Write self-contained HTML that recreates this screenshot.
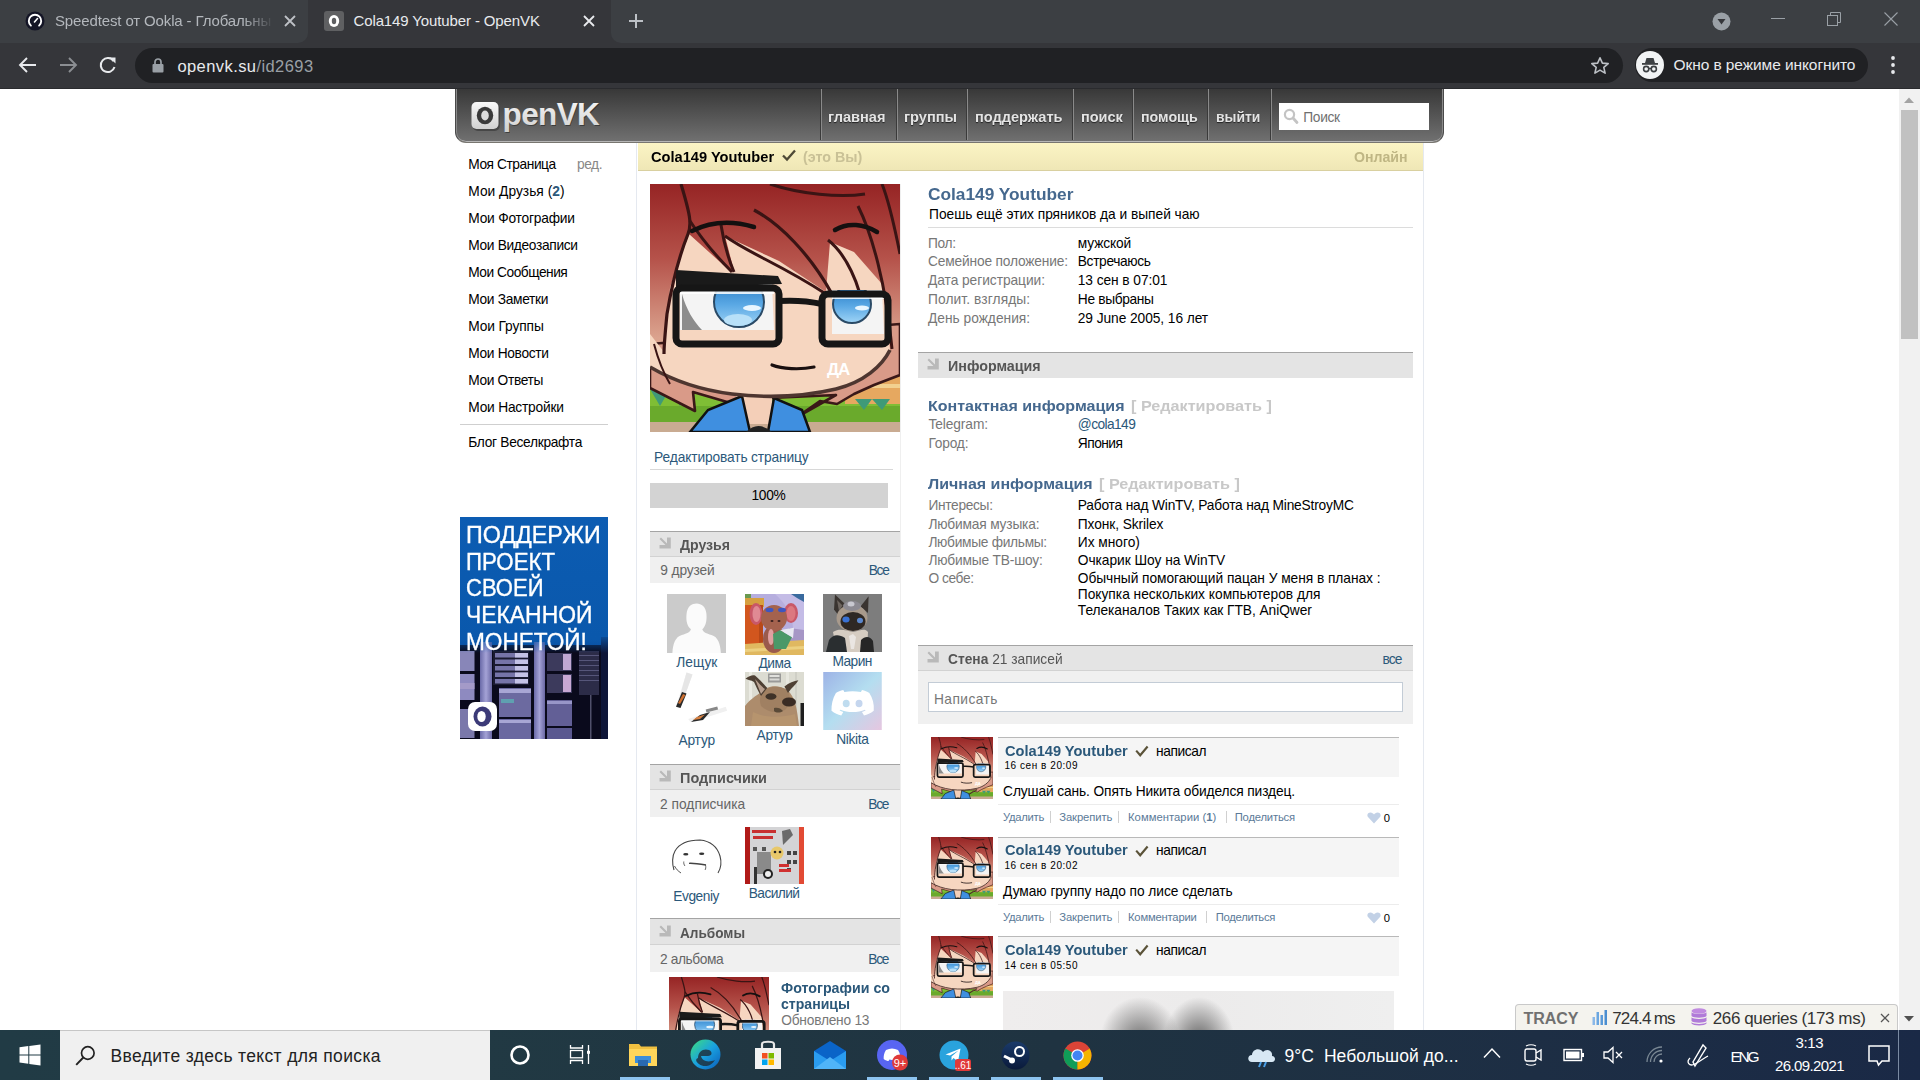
<!DOCTYPE html>
<html><head><meta charset="utf-8"><title>OpenVK</title>
<style>
*{margin:0;padding:0;box-sizing:border-box}
html,body{width:1920px;height:1080px;overflow:hidden;background:#fff;font-family:"Liberation Sans",sans-serif}
.a{position:absolute}
.t{position:absolute;white-space:pre;line-height:normal;font-family:"Liberation Sans",sans-serif}
</style></head><body>
<svg width="0" height="0" style="position:absolute">
<defs>
<linearGradient id="hairg" x1="0" y1="0" x2="0" y2="1">
<stop offset="0" stop-color="#962424"/><stop offset="0.3" stop-color="#b5524a"/><stop offset="0.62" stop-color="#dba38e"/><stop offset="1" stop-color="#e9c0a8"/>
</linearGradient>
<linearGradient id="irisg" x1="0" y1="0" x2="0" y2="1">
<stop offset="0" stop-color="#1f74c0"/><stop offset="0.55" stop-color="#5aa8e4"/><stop offset="1" stop-color="#9fd4f6"/>
</linearGradient>
<clipPath id="avclip"><rect x="0" y="0" width="250" height="248"/></clipPath>
<symbol id="ava" viewBox="0 0 250 248">
<g clip-path="url(#avclip)">
<rect x="0" y="0" width="250" height="248" fill="url(#hairg)"/>
<!-- scenery bottom -->
<rect x="0" y="196" width="250" height="52" fill="#7fbe35"/>
<rect x="0" y="222" width="250" height="18" fill="#6aaa2c"/>
<rect x="0" y="238" width="250" height="10" fill="#c9ab92"/>
<polygon points="0,205 10,222 20,205 30,222 40,205" fill="#3f9a78"/>
<rect x="195" y="178" width="55" height="42" fill="#e6a860"/>
<rect x="195" y="186" width="55" height="4" fill="#d2763a"/>
<rect x="195" y="200" width="55" height="4" fill="#f2d090"/>
<polygon points="205,215 214,226 222,215 232,226 240,215" fill="#3f9a78"/>
<!-- back hair below chin -->
<path d="M0,160 L0,204 L45,227 L43,208 L84,220 L120,214 L186,211 L147,233 L170,217 L187,220 L204,210 L224,201 L250,191 L250,140 Z" fill="#d99a88" stroke="#3a1818" stroke-width="2.6" stroke-linejoin="round"/>
<!-- neck & shirt -->
<rect x="86" y="200" width="36" height="40" fill="#f4cfb8"/>
<path d="M40,248 L58,226 L92,212 L100,248 Z" fill="#3f8fe0" stroke="#111" stroke-width="2.5"/>
<path d="M118,248 L124,214 L152,226 L160,248 Z" fill="#3f8fe0" stroke="#111" stroke-width="2.5"/>
<path d="M96,248 Q108,236 122,248 Z" fill="#222"/>
<!-- face skin -->
<path d="M20,104 L26,85 L39,50 L80,87 L84,87 L75,52 L129,77 L176,108 L180,58 L204,68 L232,100 L240,166 C232,182 214,198 186,205 C152,213 116,214 82,210 C50,206 22,196 0,183 L0,150 L14,168 Z" fill="#f6d6c0"/>
<!-- chin outline -->
<path d="M0,183 C22,196 50,206 82,210 C116,214 152,213 186,205 C214,198 232,182 240,166" fill="none" stroke="#4e3630" stroke-width="3.6"/>
<!-- hair strands over face -->
<path d="M31,0 C40,30 42,40 38,50 C30,70 22,100 17,130 C15,150 14,160 14,170" fill="none" stroke="#3a1414" stroke-width="3.2"/>
<path d="M40,37 C55,60 70,76 82,88" fill="none" stroke="#3a1414" stroke-width="3"/>
<path d="M71,41 C74,60 78,74 84,88" fill="none" stroke="#3a1414" stroke-width="3"/>
<path d="M104,26 C130,40 160,70 182,110" fill="none" stroke="#3a1414" stroke-width="3.2"/>
<path d="M75,52 C100,70 130,80 176,110" fill="none" stroke="#3a1414" stroke-width="3"/>
<path d="M178,56 C196,70 210,100 214,130" fill="none" stroke="#3a1414" stroke-width="3"/>
<path d="M208,22 C222,50 236,100 242,165" fill="none" stroke="#3a1414" stroke-width="3"/>
<path d="M120,0 C150,10 190,14 215,10" fill="none" stroke="#3a1414" stroke-width="3"/>
<path d="M232,0 C240,20 246,50 250,70" fill="none" stroke="#3a1414" stroke-width="3"/>
<path d="M4,160 C8,175 14,190 20,200" fill="none" stroke="#3a1414" stroke-width="2"/>
<!-- brows -->
<path d="M42,47 C60,38 80,36 104,43" fill="none" stroke="#141010" stroke-width="4.5" stroke-linecap="round"/>
<path d="M185,46 C198,38 214,40 227,48" fill="none" stroke="#141010" stroke-width="4.5" stroke-linecap="round"/>
<!-- eyes -->
<path d="M30,98 L122,100 L124,146 L30,146 Z" fill="#f4f4f4"/>
<path d="M32,110 C36,125 44,138 52,146 L32,146 Z" fill="#8c8c8c"/>
<clipPath id="eyeL"><path d="M30,98 L122,100 L124,146 L30,146 Z"/></clipPath>
<g clip-path="url(#eyeL)">
<circle cx="89" cy="118" r="25" fill="url(#irisg)" stroke="#2a4a66" stroke-width="2"/>
<ellipse cx="102" cy="124" rx="9" ry="3" fill="#e8f6ff"/>
<ellipse cx="88" cy="136" rx="14" ry="6" fill="#b8e0f8"/>
</g>
<rect x="30" y="107" width="94" height="3" fill="#ffffff" opacity="0.85"/>
<path d="M182,106 L232,106 L234,150 L182,150 Z" fill="#f4f4f4"/>
<clipPath id="eyeR"><path d="M182,106 L232,106 L234,150 L182,150 Z"/></clipPath>
<g clip-path="url(#eyeR)">
<circle cx="202" cy="120" r="19" fill="url(#irisg)" stroke="#2a4a66" stroke-width="2"/>
<ellipse cx="212" cy="124" rx="7" ry="2.5" fill="#e8f6ff"/>
</g>
<rect x="182" y="112" width="52" height="3" fill="#ffffff" opacity="0.85"/>
<path d="M26,86 L128,92 L132,100 L26,104 Z" fill="#1a1a1a"/>
<!-- glasses -->
<rect x="26" y="104" width="103" height="56" rx="6" fill="none" stroke="#161616" stroke-width="7"/>
<rect x="172" y="110" width="66" height="50" rx="6" fill="none" stroke="#161616" stroke-width="7"/>
<path d="M129,117 C145,116 158,117 172,120" fill="none" stroke="#161616" stroke-width="6"/>
<!-- mouth -->
<path d="M122,181 C132,185 150,186 164,183" fill="none" stroke="#1a1010" stroke-width="3.2" stroke-linecap="round"/>
<text x="177" y="191" font-family="Liberation Sans" font-weight="700" font-size="17" fill="#fff" letter-spacing="-1">ДА</text>
</g>
</symbol>
</defs>
</svg>

<!-- chrome tabstrip -->
<div class="a" style="left:0;top:0;width:1920px;height:44px;background:#35363a"></div>
<div class="a" style="left:0;top:0;width:308px;height:43px;background:#3c3f43;border-radius:0 0 10px 0"></div>
<div class="a" style="left:611px;top:0;width:1309px;height:43px;background:#3c3f43;border-radius:0 0 0 10px"></div>
<!-- toolbar -->
<div class="a" style="left:0;top:44px;width:1920px;height:45px;background:#35363a"></div>
<div class="a" style="left:0;top:88px;width:1920px;height:1px;background:#2a2b2e"></div>
<div class="a" style="left:135px;top:48px;width:1488px;height:35px;background:#202124;border-radius:18px"></div>
<div class="a" style="left:1635px;top:48px;width:233px;height:34px;background:#202124;border-radius:17px"></div>
<!-- page -->
<div class="a" style="left:0;top:89px;width:1899px;height:941px;background:#fff"></div>
<!-- scrollbar -->
<div class="a" style="left:1899px;top:89px;width:21px;height:941px;background:#f1f1f1"></div>
<div class="a" style="left:1901px;top:110px;width:17px;height:229px;background:#c1c1c1"></div>

<!-- OpenVK header -->
<div class="a" style="left:455px;top:89px;width:989px;height:54px;background:linear-gradient(#383838,#717171);border:1px solid #4a4a4a;border-top:none;border-bottom-color:#787670;border-radius:0 0 11px 11px;box-shadow:inset 1px 0 0 #8a8a8a, inset -1px 0 0 #8a8a8a, inset 0 -1px 0 #b6b6b6"></div>

<!-- main container -->
<div class="a" style="left:636px;top:143px;width:1px;height:887px;background:#e5e9f0"></div>
<div class="a" style="left:1423px;top:143px;width:1px;height:887px;background:#e5e9f0"></div>
<div class="a" style="left:638px;top:143px;width:785px;height:28px;background:linear-gradient(#fbf4c4,#efe7b6);border-bottom:1px solid #d9d0a0"></div>
<div class="a" style="left:900px;top:184px;width:1px;height:846px;background:#efefef"></div>


<!-- left nav separator -->
<div class="a" style="left:460px;top:424px;width:148px;height:1px;background:#cfcfcf"></div>

<!-- profile left column widgets -->
<div class="a" style="left:650px;top:469px;width:243px;height:1px;background:#d8d8d8"></div>
<div class="a" style="left:650px;top:483px;width:238px;height:25px;background:#d3d3d3"></div>

<!-- section headers left -->
<div class="a" style="left:650px;top:531px;width:250px;height:26px;background:#e4e4e4;border-top:1px solid #a4a4a4;border-bottom:1px solid #d2d2d2"></div>
<div class="a" style="left:650px;top:557px;width:250px;height:26px;background:#f0f0f0"></div>
<div class="a" style="left:650px;top:764px;width:250px;height:26px;background:#e4e4e4;border-top:1px solid #a4a4a4;border-bottom:1px solid #d2d2d2"></div>
<div class="a" style="left:650px;top:790px;width:250px;height:27px;background:#f0f0f0"></div>
<div class="a" style="left:650px;top:918px;width:250px;height:27px;background:#e4e4e4;border-top:1px solid #a4a4a4;border-bottom:1px solid #d2d2d2"></div>
<div class="a" style="left:650px;top:945px;width:250px;height:27px;background:#f0f0f0"></div>

<!-- right column -->
<div class="a" style="left:928px;top:227px;width:485px;height:1px;background:#dcdcdc"></div>
<div class="a" style="left:918px;top:352px;width:495px;height:26px;background:#e4e4e4;border-top:1px solid #a4a4a4"></div>
<div class="a" style="left:918px;top:645px;width:495px;height:26px;background:#e4e4e4;border-top:1px solid #a4a4a4;border-bottom:1px solid #d2d2d2"></div>
<div class="a" style="left:918px;top:671px;width:495px;height:53px;background:#f0f0f0"></div>
<div class="a" style="left:928px;top:682px;width:475px;height:30px;background:#fff;border:1px solid #c3ccd6"></div>

<!-- posts -->
<div class="a" style="left:998px;top:737px;width:401px;height:40px;background:#f5f5f5;border-top:1px solid #b9b9b9"></div>
<div class="a" style="left:998px;top:804px;width:401px;height:1px;background:#ececec"></div>
<div class="a" style="left:998px;top:837px;width:401px;height:40px;background:#f5f5f5;border-top:1px solid #b9b9b9"></div>
<div class="a" style="left:998px;top:904px;width:401px;height:1px;background:#ececec"></div>
<div class="a" style="left:998px;top:936px;width:401px;height:40px;background:#f5f5f5;border-top:1px solid #b9b9b9"></div>


<!-- avatars -->
<svg class="a" style="left:650px;top:184px" width="250" height="248" viewBox="0 0 250 248" preserveAspectRatio="none"><use href="#ava"/></svg>
<svg class="a" style="left:931px;top:737px" width="62" height="62" viewBox="0 0 250 248" preserveAspectRatio="none"><use href="#ava"/></svg>
<svg class="a" style="left:931px;top:837px" width="62" height="62" viewBox="0 0 250 248" preserveAspectRatio="none"><use href="#ava"/></svg>
<svg class="a" style="left:931px;top:936px" width="62" height="62" viewBox="0 0 250 248" preserveAspectRatio="none"><use href="#ava"/></svg>
<svg class="a" style="left:669px;top:977px" width="100" height="100" viewBox="0 0 250 248" preserveAspectRatio="none"><use href="#ava"/></svg>

<!-- ===== friend thumbs ===== -->
<svg class="a" style="left:667px;top:594px" width="59" height="59" viewBox="0 0 438 438">
<rect width="438" height="438" fill="#cbcbcb"/>
<path d="M40,438 C45,370 60,320 110,305 C150,292 170,285 178,262 C150,240 140,200 145,150 C150,90 185,70 220,70 C255,70 290,95 293,150 C297,205 285,240 262,262 C270,285 290,292 330,305 C380,320 395,370 400,438 Z" fill="#fbfbfb"/>
</svg>
<svg class="a" style="left:745px;top:594px;filter:blur(0.35px)" width="59" height="61" viewBox="0 0 59 61">
<rect width="59" height="61" fill="#b6aede"/>
<path d="M30,0 L59,0 L59,61 L40,61 C52,40 52,20 30,0 Z" fill="#c4bce6"/>
<polygon points="46,0 59,0 59,8 52,4" fill="#3a6a9e"/>
<rect x="0" y="0" width="6" height="5" fill="#6a9a50"/>
<rect x="0" y="4" width="19" height="9" fill="#d6a040"/>
<rect x="0" y="11" width="18" height="45" fill="#d2561e"/>
<rect x="14" y="11" width="4" height="45" fill="#b84818"/>
<polygon points="44,34 59,36 59,50 44,48" fill="#a696c6"/>
<polygon points="0,50 59,46 59,61 0,61" fill="#e0b860"/>
<polygon points="0,55 59,52 59,55 0,58" fill="#ecd080"/>
<ellipse cx="11" cy="20" rx="6.5" ry="11" fill="#c85868"/>
<ellipse cx="11.5" cy="20" rx="4" ry="8" fill="#e08a94"/>
<ellipse cx="46" cy="19" rx="7" ry="10" fill="#c85868"/>
<ellipse cx="46" cy="19.5" rx="4.5" ry="7.5" fill="#dc7880"/>
<ellipse cx="29" cy="45" rx="11" ry="14" fill="#9a5a4c"/>
<ellipse cx="29" cy="24" rx="13" ry="13" fill="#a4624e"/>
<ellipse cx="26" cy="43" rx="3" ry="8" fill="#e0a0a0"/>
<ellipse cx="24.5" cy="16" rx="4" ry="2.2" fill="#3e56c0"/>
<ellipse cx="37" cy="16" rx="4" ry="2.2" fill="#3e56c0"/>
<ellipse cx="27" cy="27" rx="1.5" ry="1" fill="#3a2020"/><ellipse cx="34" cy="27" rx="1.5" ry="1" fill="#3a2020"/>
<polygon points="28,40 35,36 47,43 41,55 29,55" fill="#4a9868"/>
<polygon points="35,36 49,33.8 48,44.3 46.6,43.1" fill="#e8e8f2"/>
</svg>
<svg class="a" style="left:823px;top:594px;filter:blur(0.4px)" width="59" height="58" viewBox="0 0 59 58">
<rect width="59" height="58" fill="#7d7d7d"/>
<path d="M12,0.6 L22.5,10.5 L16,22 L11,15.5 Z" fill="#3a3430"/>
<path d="M14,6 L19.5,11.5 L16,17 Z" fill="#6e6660"/>
<path d="M45.6,2.2 L45,19 L37.5,12.5 Z" fill="#3a3430"/>
<ellipse cx="29" cy="24" rx="15.5" ry="13.5" fill="#a89a8c"/>
<ellipse cx="29" cy="12" rx="9" ry="5" fill="#8c8a92"/>
<ellipse cx="28" cy="10" rx="3.5" ry="2.5" fill="#c8c8d0"/>
<ellipse cx="30" cy="27.5" rx="12.5" ry="9.5" fill="#2e2824"/>
<ellipse cx="23" cy="25.5" rx="3.6" ry="3" fill="#3a72d4"/>
<ellipse cx="37" cy="26.5" rx="3" ry="2.8" fill="#5a86cc"/>
<path d="M10,38 C16,34 22,36 30,38 C38,36 42,34 45,38 L44,58 L14,58 Z" fill="#d6cdc2"/>
<path d="M26,42 L30,40 L33,43 L31,55 L28,55 Z" fill="#eae6e2"/>
<path d="M3,58 L6,46 C10,40 16,40 22,44 L24,58 Z" fill="#2a2e30"/>
<path d="M37,58 L38,46 C42,42 47,42 50,47 L51,58 Z" fill="#262626"/>
</svg>
<svg class="a" style="left:670px;top:670px" width="62" height="56" viewBox="0 0 62 56">
<polygon points="16.5,2.5 22.5,4.6 10.5,38 6,36.8" fill="#f2f2f2"/>
<polygon points="16.5,2.5 22.5,4.6 14,28 10,26" fill="#e6e6e6"/>
<polygon points="12,22 16.5,23.5 10.5,38 6,36.8" fill="#2a2a2a"/>
<polygon points="13,24 15.5,25 10,34 8,33" fill="#d07030"/>
<polygon points="55.8,36.8 57.1,40.8 20.9,52.2 18.2,48.9" fill="#f0f0f0"/>
<polygon points="30,45 40,42 33,50 21,52" fill="#2a2a2a"/>
<polygon points="27,47 35,44.5 30,49 23,50" fill="#d88040"/>
<rect x="36" y="38" width="12" height="3" fill="#888" transform="rotate(-15 42 40)"/>
</svg>
<svg class="a" style="left:745px;top:672px;filter:blur(0.35px)" width="59" height="54" viewBox="0 0 59 54">
<rect width="59" height="54" fill="#dcdcd2"/>
<rect x="4" y="0" width="3" height="54" fill="#ebebe3"/><rect x="41" y="0" width="3" height="54" fill="#e8e8e0"/><rect x="50" y="0" width="2" height="54" fill="#cfcfc6"/>
<rect x="23" y="1.5" width="13" height="9" fill="#9a9a98"/><rect x="24.5" y="3" width="10" height="2" fill="#e0e0dc"/><rect x="24.5" y="6.5" width="10" height="2" fill="#d8d8d4"/>
<path d="M0,54 L0,34 C6,26 14,22 22,16 C28,13 36,14 42,18 C50,24 52,36 54,54 Z" fill="#ad8c6c"/>
<path d="M18,20 C24,14 34,13 42,18 C46,24 46,32 40,38 C32,42 22,40 16,34 C14,28 15,24 18,20 Z" fill="#a08062"/>
<path d="M0.5,6.7 C4,3.5 8,2.5 10,3.5 C14,7 19,12 22.3,16 L16,24 C13,19 11,14 9,10 C6,8 3,8 0.5,6.7 Z" fill="#4e4034"/>
<path d="M10,7 C13,10 17,15 20,17 L16,22 C14,17 12,12 10,7 Z" fill="#b8a090"/>
<path d="M39.4,14.5 C44,11 49,9 53.4,8.3 C52,11 49,14 46,17 L43,21 Z" fill="#4e4034"/>
<ellipse cx="26" cy="24.5" rx="5.5" ry="3.3" fill="#3e3228"/>
<ellipse cx="44" cy="30" rx="7" ry="4.5" fill="#3a2c24"/>
<path d="M29,36 C32,35 36,36 38,39 C35,41 31,41 29,39 Z" fill="#5a4a38"/>
<path d="M8,40 C20,46 36,46 50,42 L52,54 L6,54 Z" fill="#b6946e"/>
<rect x="55.5" y="31" width="3.5" height="23" fill="#1e1e1e"/>
</svg>
<svg class="a" style="left:823px;top:672px" width="59" height="58" viewBox="0 0 438 434">
<defs><linearGradient id="dg" x1="0" y1="0" x2="1" y2="1"><stop offset="0" stop-color="#9db3e6"/><stop offset="0.5" stop-color="#b4def0"/><stop offset="1" stop-color="#e6c6e0"/></linearGradient></defs>
<rect width="438" height="434" fill="url(#dg)"/>
<path d="M150,135 C130,140 110,148 95,158 C70,200 60,245 62,290 C85,310 110,320 135,325 L150,300 C140,296 130,292 122,286 L128,282 C180,305 260,305 312,282 L318,286 C310,292 300,296 290,300 L305,325 C330,320 355,310 378,290 C382,240 370,195 345,158 C330,148 310,140 290,135 L282,150 C240,142 200,142 158,150 Z" fill="#fff"/>
<ellipse cx="172" cy="235" rx="26" ry="28" fill="#bfdcef"/>
<ellipse cx="268" cy="235" rx="26" ry="28" fill="#c5d6ee"/>
</svg>
<svg class="a" style="left:670px;top:838px" width="54" height="38" viewBox="0 0 54 38">
<path d="M4,32 C2,26 2,18 5,13 C9,6 18,2 30,2 C40,3 47,8 50,18 C52,25 51,30 48,35" fill="none" stroke="#444" stroke-width="1.1"/>
<path d="M4.5,28 C6,31 8,33 11,35" fill="none" stroke="#555" stroke-width="1"/>
<ellipse cx="15.8" cy="16.2" rx="2.6" ry="1.3" fill="#333"/>
<ellipse cx="31.7" cy="15.8" rx="2.6" ry="1.3" fill="#333"/>
<path d="M19,25.3 C24,25 30,26 36,27" fill="none" stroke="#444" stroke-width="1.3"/>
<path d="M13.8,23.5 C13.5,25 14,27 15,28" fill="none" stroke="#555" stroke-width="0.9"/>
<path d="M35.5,27 C36,29 35.8,31 35,32" fill="none" stroke="#555" stroke-width="0.9"/>
</svg>
<svg class="a" style="left:745px;top:827px;filter:blur(0.35px)" width="59" height="57" viewBox="0 0 59 57">
<rect width="59" height="57" fill="#cfcfcf"/>
<rect x="5" y="0" width="49" height="57" fill="#d4d4d6"/>
<rect x="0" y="0" width="5" height="57" fill="#b01a18"/>
<rect x="54" y="0" width="5" height="57" fill="#e24a34"/>
<rect x="7" y="3" width="24" height="3" fill="#c83030"/>
<rect x="8" y="9" width="20" height="3" fill="#c83030"/>
<polygon points="37,4 45,2 48,8 38,18" fill="#6a6a6a"/>
<rect x="8" y="20" width="4" height="4" fill="#555"/><rect x="17" y="20" width="4" height="4" fill="#555"/>
<rect x="42" y="24" width="4" height="4" fill="#444"/><rect x="48" y="24" width="4" height="4" fill="#444"/>
<rect x="42" y="33" width="4" height="4" fill="#444"/><rect x="48" y="33" width="4" height="4" fill="#444"/>
<rect x="42" y="41" width="4" height="4" fill="#444"/>
<rect x="12" y="25" width="14" height="22" fill="#8a8a8a"/>
<circle cx="32" cy="26" r="6.5" fill="#e8c86a"/>
<circle cx="30" cy="25" r="1.3" fill="#222"/><circle cx="35" cy="25" r="1.3" fill="#222"/>
<circle cx="23" cy="47" r="5" fill="#222"/><circle cx="23" cy="47" r="3" fill="#eee"/>
<rect x="9" y="40" width="3" height="17" fill="#333"/>
<rect x="34" y="37" width="10" height="3" fill="#d03030"/><rect x="34" y="42" width="12" height="3" fill="#d03030"/>
</svg>

<!-- ===== ad banner ===== -->
<svg class="a" style="left:460px;top:517px" width="148" height="222" viewBox="0 0 148 222">
<defs>
<linearGradient id="adg" x1="0" y1="0" x2="0" y2="1"><stop offset="0" stop-color="#0c5cb2"/><stop offset="0.55" stop-color="#0a58ac"/><stop offset="0.68" stop-color="#0b2f78"/><stop offset="1" stop-color="#070c2a"/></linearGradient>
<linearGradient id="pil" x1="0" y1="0" x2="1" y2="0"><stop offset="0" stop-color="#6a6aa8"/><stop offset="0.5" stop-color="#a4a2d6"/><stop offset="1" stop-color="#6a68a4"/></linearGradient>
<linearGradient id="fade" x1="0" y1="0" x2="0" y2="1"><stop offset="0" stop-color="#0a58ac" stop-opacity="1"/><stop offset="1" stop-color="#0a58ac" stop-opacity="0"/></linearGradient>
</defs>
<rect width="148" height="222" fill="url(#adg)"/>
<g>
<rect x="0" y="128" width="148" height="94" fill="#0a0a1c"/>
<!-- col A -->
<rect x="0" y="134" width="14.5" height="20" fill="#8886b8"/>
<rect x="0" y="157" width="14.5" height="26" fill="#8e8ac0"/>
<rect x="0" y="166" width="14.5" height="6" fill="#a49ac8"/>
<rect x="0" y="192" width="14.5" height="29" fill="#7a78aa"/>
<!-- pillar 1 -->
<rect x="20" y="125" width="12" height="97" fill="url(#pil)"/>
<!-- rack B -->
<rect x="33" y="134" width="36" height="34" fill="#1a1a30"/>
<rect x="35" y="136" width="33" height="4.5" fill="#7674a8"/><rect x="55" y="136" width="13" height="4.5" fill="#c4c2e6"/>
<rect x="35" y="142.5" width="33" height="4.5" fill="#7674a8"/><rect x="55" y="142.5" width="13" height="4.5" fill="#c4c2e6"/>
<rect x="35" y="149" width="33" height="4.5" fill="#7674a8"/><rect x="55" y="149" width="13" height="4.5" fill="#c4c2e6"/>
<rect x="35" y="155.5" width="33" height="4.5" fill="#7674a8"/><rect x="55" y="155.5" width="13" height="4.5" fill="#c4c2e6"/>
<rect x="35" y="162" width="33" height="4.5" fill="#7674a8"/><rect x="55" y="162" width="13" height="4.5" fill="#c4c2e6"/>
<rect x="39" y="171" width="32" height="29" fill="#6c6aa0"/>
<rect x="39" y="172" width="32" height="4" fill="#a8a6d4"/>
<rect x="41" y="182" width="13" height="4" fill="#5fa0b0"/>
<rect x="39" y="202" width="32" height="20" fill="#6a68a0"/>
<rect x="39" y="203" width="32" height="3" fill="#a8a6d4"/>
<!-- pillar 2 -->
<rect x="74" y="125" width="11" height="97" fill="url(#pil)"/>
<!-- rack C -->
<rect x="87" y="136" width="25" height="18" fill="#3c3a5c"/>
<rect x="103" y="137" width="8" height="16" fill="#c0a8d2"/>
<rect x="87" y="157" width="25" height="19" fill="#3c3a5c"/>
<rect x="103" y="158" width="8" height="17" fill="#c8a8d4"/>
<rect x="87" y="183" width="25" height="26" fill="#625f96"/>
<rect x="87" y="184" width="25" height="3" fill="#9896c8"/>
<rect x="87" y="211" width="25" height="11" fill="#5a5890"/>
<!-- rack D -->
<rect x="119" y="134" width="20" height="44" fill="#2c2c48"/>
<rect x="119" y="138" width="20" height="1" fill="#56567a"/><rect x="119" y="143" width="20" height="1" fill="#56567a"/>
<rect x="119" y="148" width="20" height="1" fill="#56567a"/><rect x="119" y="153" width="20" height="1" fill="#56567a"/>
<rect x="119" y="158" width="20" height="1" fill="#56567a"/><rect x="119" y="163" width="20" height="1" fill="#56567a"/>
<rect x="130" y="178" width="1.5" height="44" fill="#50506a"/>
<rect x="141" y="120" width="7" height="102" fill="#0e1638"/>
</g>
<rect x="0" y="116" width="148" height="20" fill="url(#fade)"/>
<rect x="8" y="185" width="29" height="29" rx="7" fill="#fff"/>
<ellipse cx="22.5" cy="199.5" rx="9" ry="10" fill="#3c3a78"/>
<ellipse cx="21.5" cy="199.5" rx="4.2" ry="5.6" fill="#fff"/>
</svg>

<!-- ===== OpenVK logo ===== -->
<svg class="a" style="left:468px;top:98px" width="140" height="36" viewBox="0 0 140 36">
<defs><linearGradient id="lg" x1="0" y1="0" x2="0" y2="1"><stop offset="0" stop-color="#fafafa"/><stop offset="1" stop-color="#d0d0d0"/></linearGradient></defs>
<rect x="4" y="5" width="27" height="27" rx="5" fill="#2a2a2a" opacity="0.5" transform="translate(0.8,1)"/>
<rect x="3.5" y="4" width="27" height="27" rx="5" fill="url(#lg)"/>
<ellipse cx="17" cy="17.5" rx="8.2" ry="8.8" fill="#3a3a3a"/>
<ellipse cx="17" cy="17.5" rx="3.8" ry="5" fill="#dcdcdc"/>
<text x="34.5" y="26.5" font-family="Liberation Sans" font-weight="700" font-size="31.5" fill="#222" opacity="0.55" letter-spacing="-0.6" transform="translate(0.8,1)">penVK</text>
<text x="34.5" y="26.5" font-family="Liberation Sans" font-weight="700" font-size="31.5" fill="url(#lg)" letter-spacing="-0.6">penVK</text>
</svg>

<!-- ===== post 3 blurred image ===== -->
<div class="a" style="left:1003px;top:991px;width:391px;height:39px;background:radial-gradient(ellipse 40px 44px at 137px 50px, rgba(80,80,80,.8), rgba(80,80,80,0)), radial-gradient(ellipse 36px 46px at 196px 52px, rgba(70,70,70,.85), rgba(70,70,70,0)), linear-gradient(90deg,#efeded,#ecebeb 50%,#efefef)"></div>

<!-- tracy bar -->
<div class="a" style="left:1515px;top:1004px;width:383px;height:26px;background:#f4f3ee;border:1px solid #c9c9c9;border-bottom:none;border-radius:4px 4px 0 0"></div>

<!-- taskbar -->
<div class="a" style="left:0;top:1030px;width:1920px;height:50px;background:linear-gradient(90deg,#213b45 0%,#213943 25%,#1f3341 55%,#1d2e44 80%,#1a2946 100%)"></div>
<div class="a" style="left:60px;top:1030px;width:430px;height:50px;background:#f0f0f0;border-top:1px solid #c6c6c6"></div>

<!-- section arrows -->
<svg class="a" style="left:926px;top:357px" width="14" height="14" viewBox="0 0 14 14"><path d="M1.5,3 L3,1.5 L9,7.5 L9,1.5 L12.8,1.5 L12.8,12.5 L1.5,12.5 L1.5,9 L7.5,9 Z" fill="#b9b9b9"/></svg>
<svg class="a" style="left:926px;top:650px" width="14" height="14" viewBox="0 0 14 14"><path d="M1.5,3 L3,1.5 L9,7.5 L9,1.5 L12.8,1.5 L12.8,12.5 L1.5,12.5 L1.5,9 L7.5,9 Z" fill="#b9b9b9"/></svg>
<svg class="a" style="left:658px;top:536px" width="14" height="14" viewBox="0 0 14 14"><path d="M1.5,3 L3,1.5 L9,7.5 L9,1.5 L12.8,1.5 L12.8,12.5 L1.5,12.5 L1.5,9 L7.5,9 Z" fill="#b9b9b9"/></svg>
<svg class="a" style="left:658px;top:769px" width="14" height="14" viewBox="0 0 14 14"><path d="M1.5,3 L3,1.5 L9,7.5 L9,1.5 L12.8,1.5 L12.8,12.5 L1.5,12.5 L1.5,9 L7.5,9 Z" fill="#b9b9b9"/></svg>
<svg class="a" style="left:658px;top:924px" width="14" height="14" viewBox="0 0 14 14"><path d="M1.5,3 L3,1.5 L9,7.5 L9,1.5 L12.8,1.5 L12.8,12.5 L1.5,12.5 L1.5,9 L7.5,9 Z" fill="#b9b9b9"/></svg>

<!-- checkmarks -->
<svg class="a" style="left:780px;top:146px" width="18" height="18" viewBox="0 0 18 18"><path d="M3,9.5 L7,13.5 L15,4.5" fill="none" stroke="#4f4a36" stroke-width="2.3"/></svg>
<svg class="a" style="left:1134px;top:744px" width="16" height="14" viewBox="0 0 16 14"><path d="M2.2,6.6 L6.2,11.3 L13.6,2.5" fill="none" stroke="#5a5238" stroke-width="2.1"/></svg>
<svg class="a" style="left:1134px;top:844px" width="16" height="14" viewBox="0 0 16 14"><path d="M2.2,6.6 L6.2,11.3 L13.6,2.5" fill="none" stroke="#5a5238" stroke-width="2.1"/></svg>
<svg class="a" style="left:1134px;top:943px" width="16" height="14" viewBox="0 0 16 14"><path d="M2.2,6.6 L6.2,11.3 L13.6,2.5" fill="none" stroke="#5a5238" stroke-width="2.1"/></svg>

<!-- hearts -->
<svg class="a" style="left:1367px;top:812px" width="14" height="12" viewBox="0 0 14 12"><path d="M7,11.5 L1,5 C-0.5,3 0.8,0.5 3.5,0.5 C5,0.5 6.3,1.5 7,2.5 C7.7,1.5 9,0.5 10.5,0.5 C13.2,0.5 14.5,3 13,5 Z" fill="#c2d1e6"/></svg>
<svg class="a" style="left:1367px;top:912px" width="14" height="12" viewBox="0 0 14 12"><path d="M7,11.5 L1,5 C-0.5,3 0.8,0.5 3.5,0.5 C5,0.5 6.3,1.5 7,2.5 C7.7,1.5 9,0.5 10.5,0.5 C13.2,0.5 14.5,3 13,5 Z" fill="#c2d1e6"/></svg>

<!-- action separators -->
<div class="a" style="left:1050px;top:811px;width:1px;height:12px;background:#d0d0d0"></div>
<div class="a" style="left:1118px;top:811px;width:1px;height:12px;background:#d0d0d0"></div>
<div class="a" style="left:1226px;top:811px;width:1px;height:12px;background:#d0d0d0"></div>
<div class="a" style="left:1050px;top:911px;width:1px;height:12px;background:#d0d0d0"></div>
<div class="a" style="left:1118px;top:911px;width:1px;height:12px;background:#d0d0d0"></div>
<div class="a" style="left:1206px;top:911px;width:1px;height:12px;background:#d0d0d0"></div>

<!-- header nav separators -->
<div class="a" style="left:820px;top:89px;width:2px;height:51px;background:linear-gradient(90deg,#3a3a3a 50%,#8a8a8a 50%)"></div>
<div class="a" style="left:896px;top:89px;width:2px;height:51px;background:linear-gradient(90deg,#3a3a3a 50%,#8a8a8a 50%)"></div>
<div class="a" style="left:966px;top:89px;width:2px;height:51px;background:linear-gradient(90deg,#3a3a3a 50%,#8a8a8a 50%)"></div>
<div class="a" style="left:1072px;top:89px;width:2px;height:51px;background:linear-gradient(90deg,#3a3a3a 50%,#8a8a8a 50%)"></div>
<div class="a" style="left:1132px;top:89px;width:2px;height:51px;background:linear-gradient(90deg,#3a3a3a 50%,#8a8a8a 50%)"></div>
<div class="a" style="left:1207px;top:89px;width:2px;height:51px;background:linear-gradient(90deg,#3a3a3a 50%,#8a8a8a 50%)"></div>
<div class="a" style="left:1270px;top:89px;width:2px;height:51px;background:linear-gradient(90deg,#3a3a3a 50%,#8a8a8a 50%)"></div>
<!-- search input -->
<div class="a" style="left:1279px;top:103px;width:150px;height:27px;background:#fff"></div>
<svg class="a" style="left:1283px;top:108px" width="16" height="17" viewBox="0 0 16 17"><circle cx="6.5" cy="6.5" r="4.6" fill="none" stroke="#c4c4c4" stroke-width="2.2"/><path d="M10,10 L14,14.5" stroke="#c4c4c4" stroke-width="2.8" stroke-linecap="round"/></svg>

<!-- ===== chrome icons ===== -->
<svg class="a" style="left:25px;top:11px" width="20" height="20" viewBox="0 0 20 20"><circle cx="10" cy="10" r="9.5" fill="#141526"/><path d="M5.9,14.6 A6.2,6.2 0 1 1 14.1,14.6" fill="none" stroke="#fff" stroke-width="1.9" stroke-linecap="round"/><path d="M9.5,11 L12.5,7.5" stroke="#fff" stroke-width="1.6" stroke-linecap="round"/></svg>
<svg class="a" style="left:284px;top:15px" width="12" height="12" viewBox="0 0 12 12"><path d="M1,1 L11,11 M11,1 L1,11" stroke="#bdc1c6" stroke-width="1.8"/></svg>
<svg class="a" style="left:324px;top:11px" width="20" height="20" viewBox="0 0 20 20"><rect x="0" y="0" width="20" height="20" rx="3" fill="#5f6062"/><ellipse cx="10" cy="10" rx="5.2" ry="6" fill="#fff"/><ellipse cx="10" cy="10" rx="2.2" ry="3.3" fill="#5f6062"/></svg>
<svg class="a" style="left:583px;top:15px" width="12" height="12" viewBox="0 0 12 12"><path d="M1,1 L11,11 M11,1 L1,11" stroke="#e8eaed" stroke-width="1.8"/></svg>
<svg class="a" style="left:628px;top:13px" width="16" height="16" viewBox="0 0 16 16"><path d="M8,1 L8,15 M1,8 L15,8" stroke="#bdc1c6" stroke-width="2"/></svg>
<!-- toolbar -->
<svg class="a" style="left:18px;top:56px" width="20" height="18" viewBox="0 0 20 18"><path d="M18,9 L2.5,9 M9,2 L2,9 L9,16" fill="none" stroke="#e8eaed" stroke-width="1.9"/></svg>
<svg class="a" style="left:58px;top:56px" width="20" height="18" viewBox="0 0 20 18"><path d="M2,9 L17.5,9 M11,2 L18,9 L11,16" fill="none" stroke="#8b8e92" stroke-width="1.9"/></svg>
<svg class="a" style="left:98px;top:56px" width="20" height="18" viewBox="0 0 20 18"><path d="M15.6,5.2 A7,7 0 1 0 16.5,11" fill="none" stroke="#e8eaed" stroke-width="2"/><path d="M11.5,1.5 L17.5,1.5 L17.5,7.5 Z" fill="#e8eaed"/></svg>
<svg class="a" style="left:152px;top:58px" width="12" height="15" viewBox="0 0 12 15"><path d="M3,6 L3,4 A3,3 0 0 1 9,4 L9,6" fill="none" stroke="#9aa0a6" stroke-width="1.7"/><rect x="0.5" y="6" width="11" height="8.5" rx="1" fill="#9aa0a6"/></svg>
<svg class="a" style="left:1590px;top:56px" width="20" height="20" viewBox="0 0 20 20"><path d="M10,1.8 L12.4,7.1 L18.2,7.6 L13.8,11.4 L15.1,17.1 L10,14.1 L4.9,17.1 L6.2,11.4 L1.8,7.6 L7.6,7.1 Z" fill="none" stroke="#bdc1c6" stroke-width="1.6" stroke-linejoin="round"/></svg>
<svg class="a" style="left:1636px;top:51px" width="28" height="28" viewBox="0 0 28 28"><circle cx="14" cy="14" r="14" fill="#f1f3f4"/><path d="M9,12 L10.5,7 L17.5,7 L19,12 Z" fill="#3c4043"/><rect x="6" y="12" width="16" height="1.8" fill="#3c4043"/><circle cx="10.2" cy="18" r="2.6" fill="none" stroke="#3c4043" stroke-width="1.6"/><circle cx="17.8" cy="18" r="2.6" fill="none" stroke="#3c4043" stroke-width="1.6"/><path d="M12.8,17.5 L15.2,17.5" stroke="#3c4043" stroke-width="1.4"/></svg>
<svg class="a" style="left:1889px;top:55px" width="8" height="20" viewBox="0 0 8 20"><circle cx="4" cy="3" r="1.9" fill="#e8eaed"/><circle cx="4" cy="10" r="1.9" fill="#e8eaed"/><circle cx="4" cy="17" r="1.9" fill="#e8eaed"/></svg>
<!-- window controls -->
<svg class="a" style="left:1712px;top:12px" width="19" height="19" viewBox="0 0 19 19"><circle cx="9.5" cy="9.5" r="9" fill="#9aa0a6"/><path d="M5.5,7 L13.5,7 L9.5,12.5 Z" fill="#35363a"/></svg>
<div class="a" style="left:1771px;top:18px;width:14px;height:1px;background:#9aa0a6"></div>
<svg class="a" style="left:1826px;top:11px" width="16" height="16" viewBox="0 0 16 16"><rect x="1.5" y="4.5" width="10" height="10" fill="none" stroke="#9aa0a6" stroke-width="1"/><path d="M4.5,4.5 L4.5,1.5 L14.5,1.5 L14.5,11.5 L11.5,11.5" fill="none" stroke="#9aa0a6" stroke-width="1"/></svg>
<svg class="a" style="left:1883px;top:11px" width="16" height="16" viewBox="0 0 16 16"><path d="M1.5,1.5 L14.5,14.5 M14.5,1.5 L1.5,14.5" stroke="#9aa0a6" stroke-width="1.1"/></svg>
<!-- scrollbar arrows -->
<svg class="a" style="left:1903px;top:96px" width="12" height="8" viewBox="0 0 12 8"><path d="M1,7 L6,1.5 L11,7 Z" fill="#a3a3a3"/></svg>
<svg class="a" style="left:1903px;top:1015px" width="12" height="8" viewBox="0 0 12 8"><path d="M1,1 L6,6.5 L11,1 Z" fill="#505050"/></svg>

<!-- ===== tracy icons ===== -->
<svg class="a" style="left:1592px;top:1008px" width="16" height="17" viewBox="0 0 16 17"><rect x="0.5" y="9" width="2.5" height="8" fill="#8ab8e8"/><rect x="4.5" y="4" width="2.5" height="13" fill="#6aa6e0"/><rect x="8.5" y="7" width="2.5" height="10" fill="#5a9ad8"/><rect x="12.5" y="2" width="2.5" height="15" fill="#4a8ed0"/></svg>
<svg class="a" style="left:1691px;top:1008px" width="16" height="18" viewBox="0 0 16 18"><ellipse cx="8" cy="3" rx="7.5" ry="2.8" fill="#c08ae0"/><path d="M0.5,4.2 C2,6.5 14,6.5 15.5,4.2 L15.5,8 C14,10.3 2,10.3 0.5,8 Z" fill="#b07ad8"/><path d="M0.5,9.2 C2,11.5 14,11.5 15.5,9.2 L15.5,13 C14,15.3 2,15.3 0.5,13 Z" fill="#b07ad8"/><path d="M0.5,14.2 C2,16.5 14,16.5 15.5,14.2 L15.5,15.5 C14,18 2,18 0.5,15.5 Z" fill="#b07ad8"/></svg>
<svg class="a" style="left:1880px;top:1013px" width="10" height="10" viewBox="0 0 10 10"><path d="M1,1 L9,9 M9,1 L1,9" stroke="#555" stroke-width="1.3"/></svg>

<!-- ===== taskbar icons ===== -->
<svg class="a" style="left:19px;top:1044px" width="22" height="22" viewBox="0 0 22 22"><path d="M0.5,3.3 L9.3,2.1 L9.3,10.4 L0.5,10.4 Z M10.3,2 L21.5,0.5 L21.5,10.4 L10.3,10.4 Z M0.5,11.4 L9.3,11.4 L9.3,19.8 L0.5,18.6 Z M10.3,11.4 L21.5,11.4 L21.5,21.5 L10.3,19.9 Z" fill="#fff"/></svg>
<svg class="a" style="left:75px;top:1045px" width="21" height="21" viewBox="0 0 21 21"><circle cx="12.8" cy="8" r="6.3" fill="none" stroke="#222" stroke-width="1.7"/><path d="M8.3,12.5 L1.2,19.8" stroke="#222" stroke-width="1.9"/></svg>
<svg class="a" style="left:509px;top:1044px" width="22" height="22" viewBox="0 0 22 22"><circle cx="11" cy="11" r="8.5" fill="none" stroke="#fff" stroke-width="2.6"/></svg>
<svg class="a" style="left:568px;top:1043px" width="24" height="24" viewBox="0 0 24 24"><path d="M2.5,2 L2.5,5 L14.5,5 L14.5,2" fill="none" stroke="#fff" stroke-width="1.3"/><rect x="2.5" y="7.5" width="12" height="7.3" fill="none" stroke="#fff" stroke-width="1.3"/><path d="M2.5,21 L2.5,17.5 L14.5,17.5 L14.5,21" fill="none" stroke="#fff" stroke-width="1.3"/><path d="M20.5,2 L20.5,21" stroke="#fff" stroke-width="1.3"/><rect x="19" y="7.8" width="3" height="3" fill="#fff"/></svg>
<!-- explorer -->
<svg class="a" style="left:629px;top:1042px" width="29" height="26" viewBox="0 0 29 26"><path d="M0,2 L10,2 L12,4.5 L28,4.5 L28,24 L0,24 Z" fill="#f0c040"/><path d="M0,7 L28,7 L28,24 L0,24 Z" fill="#ffd65a"/><rect x="6" y="14" width="16" height="7" fill="#3c8ed8"/><rect x="9" y="18" width="10" height="6" fill="#2a6ab0"/></svg>
<div class="a" style="left:620px;top:1077px;width:50px;height:3px;background:#8dc4f0"></div>
<!-- edge -->
<svg class="a" style="left:690px;top:1039px" width="31" height="31" viewBox="0 0 31 31"><defs><linearGradient id="edg" x1="0" y1="0" x2="1" y2="1"><stop offset="0" stop-color="#3ee07a"/><stop offset="0.5" stop-color="#1aa2e0"/><stop offset="1" stop-color="#0a5cb8"/></linearGradient></defs><circle cx="15.5" cy="15.5" r="15" fill="url(#edg)"/><path d="M8,19 C8,12 14,9 19,11 C23,13 22,17 18,17 L11,17 C12,22 18,24 25,21 C22,27 14,29 9,25 C6,23 5,20 8,19 Z" fill="#1f3340" opacity="0.85"/></svg>
<!-- store -->
<svg class="a" style="left:753px;top:1040px" width="30" height="30" viewBox="0 0 30 30"><path d="M2,8 L28,8 L28,29 L2,29 Z" fill="#f2f2f2"/><path d="M9,8 L9,4 C9,1 21,1 21,4 L21,8" fill="none" stroke="#e8e8e8" stroke-width="2.2"/><rect x="9" y="13" width="5.5" height="5.5" fill="#f25022"/><rect x="15.5" y="13" width="5.5" height="5.5" fill="#7fba00"/><rect x="9" y="19.5" width="5.5" height="5.5" fill="#00a4ef"/><rect x="15.5" y="19.5" width="5.5" height="5.5" fill="#ffb900"/></svg>
<!-- mail -->
<svg class="a" style="left:814px;top:1041px" width="32" height="28" viewBox="0 0 32 28"><path d="M0,10 L16,0 L32,10 L32,28 L0,28 Z" fill="#0a64c8"/><path d="M0,10 L16,20 L32,10 L32,28 L0,28 Z" fill="#2a9cf0"/><path d="M0,28 L16,16 L32,28 Z" fill="#50b4f8"/></svg>
<!-- discord -->
<svg class="a" style="left:877px;top:1040px" width="32" height="32" viewBox="0 0 32 32"><circle cx="15" cy="15" r="15" fill="#5865f2"/><path d="M9,10 C11,9 13,8.5 15,8.5 C17,8.5 19,9 21,10 C23,13 23.5,16 23.3,19 C21.5,20.5 19.5,21 18.5,21 L17.5,19.5 C16,20 14,20 12.5,19.5 L11.5,21 C10.5,21 8.5,20.5 6.7,19 C6.5,16 7,13 9,10 Z" fill="#fff"/><circle cx="23" cy="22.5" r="8" fill="#e03a3a"/><text x="23" y="26.5" text-anchor="middle" font-family="Liberation Sans" font-size="11" fill="#fff">9+</text></svg>
<div class="a" style="left:867px;top:1077px;width:50px;height:3px;background:#8dc4f0"></div>
<!-- telegram -->
<svg class="a" style="left:939px;top:1040px" width="33" height="32" viewBox="0 0 33 32"><circle cx="15" cy="15" r="14.5" fill="#2aa3dd"/><path d="M6.5,14.5 L21.5,8.5 L19,21.5 L14.5,18 L12.5,20.5 L12.5,16.5 L19.5,10.5 L11,15.5 Z" fill="#fff"/><rect x="16" y="19" width="16" height="12" rx="2.5" fill="#e03a3a"/><text x="24" y="29" text-anchor="middle" font-family="Liberation Sans" font-size="10" fill="#fff">..61</text></svg>
<div class="a" style="left:929px;top:1077px;width:50px;height:3px;background:#8dc4f0"></div>
<!-- steam -->
<svg class="a" style="left:1001px;top:1041px" width="29" height="29" viewBox="0 0 29 29"><defs><linearGradient id="stg" x1="0" y1="0" x2="0" y2="1"><stop offset="0" stop-color="#1a3a6a"/><stop offset="1" stop-color="#0a1a3a"/></linearGradient></defs><circle cx="14.5" cy="14.5" r="14" fill="url(#stg)"/><circle cx="18.5" cy="10.5" r="4.5" fill="none" stroke="#fff" stroke-width="2"/><path d="M3,15 L11,19" stroke="#fff" stroke-width="3"/><circle cx="11" cy="19.5" r="3" fill="#fff"/></svg>
<div class="a" style="left:991px;top:1077px;width:50px;height:3px;background:#8dc4f0"></div>
<!-- chrome -->
<svg class="a" style="left:1063px;top:1041px" width="29" height="29" viewBox="0 0 29 29"><circle cx="14.5" cy="14.5" r="14" fill="#db4437"/><path d="M14.5,14.5 L2.4,7.5 A14,14 0 0 0 14.5,28.5 Z" fill="#0f9d58"/><path d="M14.5,14.5 L14.5,28.5 A14,14 0 0 0 26.6,7.5 Z" fill="#f4b400"/><path d="M14.5,14.5 L26.6,7.5 L14.5,7.5 Z" fill="#db4437"/><circle cx="14.5" cy="14.5" r="6.3" fill="#fff"/><circle cx="14.5" cy="14.5" r="5" fill="#4285f4"/></svg>
<div class="a" style="left:1053px;top:1077px;width:50px;height:3px;background:#8dc4f0"></div>
<!-- tray -->
<svg class="a" style="left:1246px;top:1043px" width="30" height="26" viewBox="0 0 30 26"><path d="M6,19 C1,19 1,12 6,12 C6,6 14,4 17,9 C20,5 27,7 26,13 C30,13 30,19 26,19 Z" fill="#d8e8f4"/><path d="M15,19 L13,24 M20,19 L18,24" stroke="#4aa0e8" stroke-width="2"/></svg>
<svg class="a" style="left:1483px;top:1047px" width="18" height="12" viewBox="0 0 18 12"><path d="M1,10.5 L9,2 L17,10.5" fill="none" stroke="#fff" stroke-width="1.5"/></svg>
<svg class="a" style="left:1523px;top:1044px" width="20" height="22" viewBox="0 0 20 22"><rect x="2" y="5" width="11" height="12" rx="2" fill="none" stroke="#fff" stroke-width="1.4"/><path d="M13,9 L18,6 L18,16 L13,13" fill="none" stroke="#fff" stroke-width="1.4"/><path d="M3,2 C6,0.5 10,0.5 13,2 M3,20 C6,21.5 10,21.5 13,20" fill="none" stroke="#fff" stroke-width="1.2"/></svg>
<svg class="a" style="left:1563px;top:1048px" width="22" height="14" viewBox="0 0 22 14"><rect x="1" y="1.5" width="17.5" height="11" fill="none" stroke="#fff" stroke-width="1.4"/><rect x="3" y="3.5" width="13.5" height="7" fill="#fff"/><rect x="19" y="5" width="2" height="4" fill="#fff"/></svg>
<svg class="a" style="left:1603px;top:1046px" width="20" height="18" viewBox="0 0 20 18"><path d="M1,6 L5,6 L10,1.5 L10,16.5 L5,12 L1,12 Z" fill="none" stroke="#fff" stroke-width="1.3"/><path d="M13,6 L19,12 M19,6 L13,12" stroke="#fff" stroke-width="1.3"/></svg>
<svg class="a" style="left:1645px;top:1045px" width="20" height="20" viewBox="0 0 20 20"><path d="M2,17 A15,15 0 0 1 17,2 M5.5,17 A11.5,11.5 0 0 1 17,5.5 M9,17 A8,8 0 0 1 17,9" fill="none" stroke="#7a8894" stroke-width="1.3"/><circle cx="16" cy="16" r="1.6" fill="#fff"/></svg>
<svg class="a" style="left:1686px;top:1042px" width="24" height="26" viewBox="0 0 24 26"><path d="M9,24 L20,6 L17,3 L7,20 Z" fill="none" stroke="#fff" stroke-width="1.4"/><path d="M4,16 C0,20 3,25 9,22 C13,20 18,16 22,14" fill="none" stroke="#fff" stroke-width="1.3"/></svg>
<svg class="a" style="left:1866px;top:1043px" width="26" height="26" viewBox="0 0 26 26"><path d="M3,3 L23,3 L23,18 L16,18 L12.5,22 L11,18 L3,18 Z" fill="none" stroke="#fff" stroke-width="1.5"/></svg>
<div class="a" style="left:1898px;top:1030px;width:1px;height:50px;background:#7a8aa2"></div>

<div class="t" style="left:55.00px;top:11.80px;font-size:15px;color:#b4b8bd;letter-spacing:-0.133px;width:218px;overflow:hidden;-webkit-mask-image:linear-gradient(90deg,#000 86%,rgba(0,0,0,0.05));">Speedtest от Ookla - Глобальны</div>
<div class="t" style="left:353.50px;top:11.80px;font-size:15px;color:#e8eaed;letter-spacing:-0.121px;">Cola149 Youtuber - OpenVK</div>
<div class="t" style="left:177.40px;top:56.50px;font-size:16.5px;color:#e8eaed;letter-spacing:0.423px;">openvk.su<span style="color:#9aa0a6">/id2693</span></div>
<div class="t" style="left:1673.50px;top:56.20px;font-size:15.5px;color:#e8eaed;letter-spacing:-0.080px;">Окно в режиме инкогнито</div>
<div class="t" style="left:828.25px;top:108.75px;font-size:14.5px;color:#e4e4e4;font-weight:700;transform:scaleX(1.0060);transform-origin:0 0;text-shadow:0 1px 1px #222;">главная</div>
<div class="t" style="left:903.90px;top:108.75px;font-size:14.5px;color:#e4e4e4;font-weight:700;transform:scaleX(1.0081);transform-origin:0 0;text-shadow:0 1px 1px #222;">группы</div>
<div class="t" style="left:975.10px;top:108.75px;font-size:14.5px;color:#e4e4e4;font-weight:700;transform:scaleX(1.0045);transform-origin:0 0;text-shadow:0 1px 1px #222;">поддержать</div>
<div class="t" style="left:1080.75px;top:108.75px;font-size:14.5px;color:#e4e4e4;font-weight:700;transform:scaleX(0.9998);transform-origin:0 0;text-shadow:0 1px 1px #222;">поиск</div>
<div class="t" style="left:1140.75px;top:108.75px;font-size:14.5px;color:#e4e4e4;font-weight:700;transform:scaleX(0.9807);transform-origin:0 0;text-shadow:0 1px 1px #222;">помощь</div>
<div class="t" style="left:1215.75px;top:108.75px;font-size:14.5px;color:#e4e4e4;font-weight:700;transform:scaleX(0.9592);transform-origin:0 0;text-shadow:0 1px 1px #222;">выйти</div>
<div class="t" style="left:1303.25px;top:109.75px;font-size:13.75px;color:#707070;letter-spacing:-0.315px;">Поиск</div>
<div class="t" style="left:468.25px;top:157.00px;font-size:13.75px;color:#000;letter-spacing:-0.445px;">Моя Страница</div>
<div class="t" style="left:468.25px;top:184.00px;font-size:13.75px;color:#000;letter-spacing:0.019px;">Мои Друзья (<b style="color:#2b587a">2</b>)</div>
<div class="t" style="left:468.25px;top:211.00px;font-size:13.75px;color:#000;letter-spacing:-0.207px;">Мои Фотографии</div>
<div class="t" style="left:468.25px;top:238.00px;font-size:13.75px;color:#000;letter-spacing:-0.333px;">Мои Видеозаписи</div>
<div class="t" style="left:468.25px;top:265.00px;font-size:13.75px;color:#000;letter-spacing:-0.487px;">Мои Сообщения</div>
<div class="t" style="left:468.25px;top:292.00px;font-size:13.75px;color:#000;letter-spacing:-0.321px;">Мои Заметки</div>
<div class="t" style="left:468.25px;top:319.00px;font-size:13.75px;color:#000;letter-spacing:-0.114px;">Мои Группы</div>
<div class="t" style="left:468.25px;top:346.00px;font-size:13.75px;color:#000;letter-spacing:-0.333px;">Мои Новости</div>
<div class="t" style="left:468.25px;top:373.00px;font-size:13.75px;color:#000;letter-spacing:-0.348px;">Мои Ответы</div>
<div class="t" style="left:468.25px;top:400.00px;font-size:13.75px;color:#000;letter-spacing:-0.211px;">Мои Настройки</div>
<div class="t" style="left:468.25px;top:435.00px;font-size:13.75px;color:#000;letter-spacing:-0.300px;">Блог Веселкрафта</div>
<div class="t" style="left:577.00px;top:157.00px;font-size:13.75px;color:#888;letter-spacing:-0.448px;">ред.</div>
<div class="t" style="left:466.00px;top:521.90px;font-size:23.5px;color:#fff;transform:scaleX(0.9899);transform-origin:0 0;-webkit-text-stroke:0.35px #fff;">ПОДДЕРЖИ</div>
<div class="t" style="left:466.00px;top:548.80px;font-size:23.5px;color:#fff;transform:scaleX(0.9463);transform-origin:0 0;-webkit-text-stroke:0.35px #fff;">ПРОЕКТ</div>
<div class="t" style="left:466.00px;top:575.30px;font-size:23.5px;color:#fff;transform:scaleX(0.9369);transform-origin:0 0;-webkit-text-stroke:0.35px #fff;">СВОЕЙ</div>
<div class="t" style="left:466.00px;top:602.30px;font-size:23.5px;color:#fff;transform:scaleX(0.9737);transform-origin:0 0;-webkit-text-stroke:0.35px #fff;">ЧЕКАННОЙ</div>
<div class="t" style="left:466.00px;top:628.70px;font-size:23.5px;color:#fff;transform:scaleX(0.9625);transform-origin:0 0;-webkit-text-stroke:0.35px #fff;">МОНЕТОЙ!</div>
<div class="t" style="left:651.40px;top:148.90px;font-size:14.5px;color:#000;font-weight:700;transform:scaleX(1.0094);transform-origin:0 0;">Cola149 Youtuber</div>
<div class="t" style="left:803.25px;top:148.90px;font-size:14.5px;color:#c9c196;font-weight:700;transform:scaleX(0.9854);transform-origin:0 0;">(это Вы)</div>
<div class="t" style="left:1354.20px;top:148.90px;font-size:14.5px;color:#bfb684;font-weight:700;transform:scaleX(0.9748);transform-origin:0 0;">Онлайн</div>
<div class="t" style="left:654.10px;top:450.10px;font-size:13.75px;color:#2b587a;letter-spacing:-0.128px;">Редактировать страницу</div>
<div class="t" style="left:751.50px;top:487.60px;font-size:13.75px;color:#000;letter-spacing:-0.307px;">100%</div>
<div class="t" style="left:679.50px;top:537.30px;font-size:14.5px;color:#555;font-weight:700;transform:scaleX(0.9718);transform-origin:0 0;">Друзья</div>
<div class="t" style="left:660.30px;top:562.90px;font-size:13.75px;color:#666;letter-spacing:-0.135px;">9 друзей</div>
<div class="t" style="left:868.80px;top:562.90px;font-size:13.75px;color:#2b587a;letter-spacing:-1.352px;">Все</div>
<div class="t" style="left:676.20px;top:654.70px;font-size:13.75px;color:#2b587a;letter-spacing:0.017px;">Лещук</div>
<div class="t" style="left:758.40px;top:656.40px;font-size:13.75px;color:#2b587a;letter-spacing:-0.465px;">Дима</div>
<div class="t" style="left:832.40px;top:653.60px;font-size:13.75px;color:#2b587a;letter-spacing:-0.547px;">Марин</div>
<div class="t" style="left:678.40px;top:732.90px;font-size:13.75px;color:#2b587a;letter-spacing:-0.161px;">Артур</div>
<div class="t" style="left:756.50px;top:728.00px;font-size:13.75px;color:#2b587a;letter-spacing:-0.261px;">Артур</div>
<div class="t" style="left:836.20px;top:732.40px;font-size:13.75px;color:#2b587a;letter-spacing:-0.358px;">Nikita</div>
<div class="t" style="left:680.00px;top:770.00px;font-size:14.5px;color:#555;font-weight:700;transform:scaleX(0.9982);transform-origin:0 0;">Подписчики</div>
<div class="t" style="left:660.00px;top:796.75px;font-size:13.75px;color:#666;letter-spacing:0.028px;">2 подписчика</div>
<div class="t" style="left:868.25px;top:796.75px;font-size:13.75px;color:#2b587a;letter-spacing:-1.227px;">Все</div>
<div class="t" style="left:673.25px;top:888.50px;font-size:13.75px;color:#2b587a;letter-spacing:-0.445px;">Evgeniy</div>
<div class="t" style="left:748.75px;top:885.50px;font-size:13.75px;color:#2b587a;letter-spacing:-0.586px;">Василий</div>
<div class="t" style="left:680.00px;top:924.50px;font-size:14.5px;color:#555;font-weight:700;transform:scaleX(0.9376);transform-origin:0 0;">Альбомы</div>
<div class="t" style="left:660.00px;top:951.75px;font-size:13.75px;color:#666;letter-spacing:-0.398px;">2 альбома</div>
<div class="t" style="left:868.25px;top:951.75px;font-size:13.75px;color:#2b587a;letter-spacing:-1.227px;">Все</div>
<div class="t" style="left:781.25px;top:979.50px;font-size:14.5px;color:#2b587a;font-weight:700;transform:scaleX(0.9813);transform-origin:0 0;">Фотографии со</div>
<div class="t" style="left:781.25px;top:995.75px;font-size:14.5px;color:#2b587a;font-weight:700;transform:scaleX(0.9710);transform-origin:0 0;">страницы</div>
<div class="t" style="left:781.25px;top:1013.00px;font-size:13.75px;color:#777;letter-spacing:-0.234px;">Обновлено 13</div>
<div class="t" style="left:928.00px;top:184.80px;font-size:16.5px;color:#45688e;font-weight:700;transform:scaleX(1.0478);transform-origin:0 0;">Cola149 Youtuber</div>
<div class="t" style="left:929.10px;top:207.40px;font-size:13.75px;color:#000;letter-spacing:-0.025px;">Поешь ещё этих пряников да и выпей чаю</div>
<div class="t" style="left:928.00px;top:236.10px;font-size:13.75px;color:#777;letter-spacing:-0.326px;">Пол:</div>
<div class="t" style="left:1077.80px;top:236.10px;font-size:13.75px;color:#000;letter-spacing:-0.153px;">мужской</div>
<div class="t" style="left:928.00px;top:254.20px;font-size:13.75px;color:#777;letter-spacing:-0.174px;">Семейное положение:</div>
<div class="t" style="left:1077.80px;top:254.20px;font-size:13.75px;color:#000;letter-spacing:-0.349px;">Встречаюсь</div>
<div class="t" style="left:928.00px;top:273.40px;font-size:13.75px;color:#777;letter-spacing:-0.050px;">Дата регистрации:</div>
<div class="t" style="left:1077.80px;top:273.40px;font-size:13.75px;color:#000;letter-spacing:-0.069px;">13 сен в 07:01</div>
<div class="t" style="left:928.00px;top:291.50px;font-size:13.75px;color:#777;letter-spacing:0.099px;">Полит. взгляды:</div>
<div class="t" style="left:1077.80px;top:291.50px;font-size:13.75px;color:#000;letter-spacing:-0.337px;">Не выбраны</div>
<div class="t" style="left:928.00px;top:310.70px;font-size:13.75px;color:#777;">День рождения:</div>
<div class="t" style="left:1077.80px;top:310.70px;font-size:13.75px;color:#000;letter-spacing:-0.069px;">29 June 2005, 16 лет</div>
<div class="t" style="left:947.80px;top:357.60px;font-size:14.5px;color:#555;font-weight:700;transform:scaleX(0.9852);transform-origin:0 0;">Информация</div>
<div class="t" style="left:928.40px;top:397.60px;font-size:14.5px;color:#45688e;font-weight:700;transform:scaleX(1.1046);transform-origin:0 0;">Контактная информация</div>
<div class="t" style="left:1131.20px;top:397.60px;font-size:14.5px;color:#c8c8c8;font-weight:700;transform:scaleX(1.1169);transform-origin:0 0;">[ Редактировать ]</div>
<div class="t" style="left:928.40px;top:417.40px;font-size:13.75px;color:#777;letter-spacing:-0.084px;">Telegram:</div>
<div class="t" style="left:1077.80px;top:417.40px;font-size:13.75px;color:#2b587a;letter-spacing:-0.589px;">@cola149</div>
<div class="t" style="left:928.40px;top:436.30px;font-size:13.75px;color:#777;letter-spacing:-0.183px;">Город:</div>
<div class="t" style="left:1077.80px;top:436.30px;font-size:13.75px;color:#000;letter-spacing:-0.510px;">Япония</div>
<div class="t" style="left:928.40px;top:476.40px;font-size:14.5px;color:#45688e;font-weight:700;transform:scaleX(1.1017);transform-origin:0 0;">Личная информация</div>
<div class="t" style="left:1099.20px;top:476.40px;font-size:14.5px;color:#c8c8c8;font-weight:700;transform:scaleX(1.1169);transform-origin:0 0;">[ Редактировать ]</div>
<div class="t" style="left:928.40px;top:497.50px;font-size:13.75px;color:#777;letter-spacing:-0.318px;">Интересы:</div>
<div class="t" style="left:1077.80px;top:497.50px;font-size:13.75px;color:#000;letter-spacing:-0.189px;">Работа над WinTV, Работа над MineStroyMC</div>
<div class="t" style="left:928.40px;top:516.80px;font-size:13.75px;color:#777;letter-spacing:-0.187px;">Любимая музыка:</div>
<div class="t" style="left:1077.80px;top:516.80px;font-size:13.75px;color:#000;letter-spacing:-0.082px;">Пхонк, Skrilex</div>
<div class="t" style="left:928.40px;top:534.80px;font-size:13.75px;color:#777;letter-spacing:-0.303px;">Любимые фильмы:</div>
<div class="t" style="left:1077.80px;top:534.80px;font-size:13.75px;color:#000;letter-spacing:-0.015px;">Их много)</div>
<div class="t" style="left:928.40px;top:553.40px;font-size:13.75px;color:#777;letter-spacing:-0.191px;">Любимые ТВ-шоу:</div>
<div class="t" style="left:1077.80px;top:553.40px;font-size:13.75px;color:#000;letter-spacing:-0.037px;">Очкарик Шоу на WinTV</div>
<div class="t" style="left:928.40px;top:571.30px;font-size:13.75px;color:#777;letter-spacing:-0.413px;">О себе:</div>
<div class="t" style="left:1077.80px;top:571.30px;font-size:13.75px;color:#000;letter-spacing:-0.044px;">Обычный помогающий пацан У меня в планах :</div>
<div class="t" style="left:1077.80px;top:587.10px;font-size:13.75px;color:#000;">Покупка нескольких компьютеров для</div>
<div class="t" style="left:1077.80px;top:602.90px;font-size:13.75px;color:#000;letter-spacing:-0.047px;">Телеканалов Таких как ГТВ, AniQwer</div>
<div class="t" style="left:947.50px;top:650.75px;font-size:14.5px;color:#555;font-weight:700;transform:scaleX(0.9491);transform-origin:0 0;">Стена <span style="font-weight:400">21 записей</span></div>
<div class="t" style="left:1382.40px;top:651.75px;font-size:13.75px;color:#2b587a;letter-spacing:-0.794px;">все</div>
<div class="t" style="left:934.00px;top:691.75px;font-size:13.75px;color:#777;letter-spacing:0.444px;">Написать</div>
<div class="t" style="left:1004.60px;top:742.60px;font-size:14.5px;color:#2b587a;font-weight:700;transform:scaleX(1.0069);transform-origin:0 0;">Cola149 Youtuber</div>
<div class="t" style="left:1156.10px;top:743.60px;font-size:13.75px;color:#000;letter-spacing:-0.420px;">написал</div>
<div class="t" style="left:1004.50px;top:760.40px;font-size:10px;color:#000;letter-spacing:0.547px;">16 сен в 20:09</div>
<div class="t" style="left:1003.10px;top:783.70px;font-size:13.75px;color:#000;letter-spacing:-0.117px;">Слушай сань. Опять Никита обиделся пиздец.</div>
<div class="t" style="left:1003.10px;top:810.70px;font-size:11.25px;color:#5b7a98;letter-spacing:-0.292px;">Удалить</div>
<div class="t" style="left:1059.20px;top:810.70px;font-size:11.25px;color:#5b7a98;letter-spacing:-0.074px;">Закрепить</div>
<div class="t" style="left:1128.00px;top:810.70px;font-size:11.25px;color:#5b7a98;letter-spacing:0.039px;">Комментарии (<b>1</b>)</div>
<div class="t" style="left:1234.70px;top:810.70px;font-size:11.25px;color:#5b7a98;letter-spacing:-0.192px;">Поделиться</div>
<div class="t" style="left:1383.80px;top:812.00px;font-size:11.25px;color:#000;">0</div>
<div class="t" style="left:1004.60px;top:842.40px;font-size:14.5px;color:#2b587a;font-weight:700;transform:scaleX(1.0069);transform-origin:0 0;">Cola149 Youtuber</div>
<div class="t" style="left:1156.10px;top:843.40px;font-size:13.75px;color:#000;letter-spacing:-0.420px;">написал</div>
<div class="t" style="left:1004.50px;top:860.20px;font-size:10px;color:#000;letter-spacing:0.547px;">16 сен в 20:02</div>
<div class="t" style="left:1003.10px;top:883.50px;font-size:13.75px;color:#000;letter-spacing:-0.046px;">Думаю группу надо по лисе сделать</div>
<div class="t" style="left:1003.10px;top:910.50px;font-size:11.25px;color:#5b7a98;letter-spacing:-0.292px;">Удалить</div>
<div class="t" style="left:1059.20px;top:910.50px;font-size:11.25px;color:#5b7a98;letter-spacing:-0.074px;">Закрепить</div>
<div class="t" style="left:1128.00px;top:910.50px;font-size:11.25px;color:#5b7a98;letter-spacing:-0.206px;">Комментарии</div>
<div class="t" style="left:1215.70px;top:910.50px;font-size:11.25px;color:#5b7a98;letter-spacing:-0.269px;">Поделиться</div>
<div class="t" style="left:1383.80px;top:911.80px;font-size:11.25px;color:#000;">0</div>
<div class="t" style="left:1004.60px;top:942.00px;font-size:14.5px;color:#2b587a;font-weight:700;transform:scaleX(1.0069);transform-origin:0 0;">Cola149 Youtuber</div>
<div class="t" style="left:1156.10px;top:943.00px;font-size:13.75px;color:#000;letter-spacing:-0.420px;">написал</div>
<div class="t" style="left:1004.50px;top:959.80px;font-size:10px;color:#000;letter-spacing:0.547px;">14 сен в 05:50</div>
<div class="t" style="left:1523.50px;top:1009.90px;font-size:16px;color:#707070;font-weight:700;letter-spacing:-0.077px;">TRACY</div>
<div class="t" style="left:1612.20px;top:1008.90px;font-size:17px;color:#333;letter-spacing:-0.820px;">724.4<span style="margin-left:3px"></span>ms</div>
<div class="t" style="left:1712.80px;top:1008.90px;font-size:17px;color:#333;letter-spacing:-0.397px;">266 queries (173 ms)</div>
<div class="t" style="left:110.50px;top:1045.60px;font-size:17.5px;color:#222;letter-spacing:0.340px;">Введите здесь текст для поиска</div>
<div class="t" style="left:1284.50px;top:1046.00px;font-size:17.5px;color:#fff;letter-spacing:0.057px;">9°C&nbsp; Небольшой до...</div>
<div class="t" style="left:1730.50px;top:1048.00px;font-size:15.5px;color:#fff;letter-spacing:-2.297px;">ENG</div>
<div class="t" style="left:1795.50px;top:1034.00px;font-size:15px;color:#fff;letter-spacing:-0.401px;">3:13</div>
<div class="t" style="left:1775.10px;top:1056.60px;font-size:15px;color:#fff;letter-spacing:-0.631px;">26.09.2021</div>
</body></html>
